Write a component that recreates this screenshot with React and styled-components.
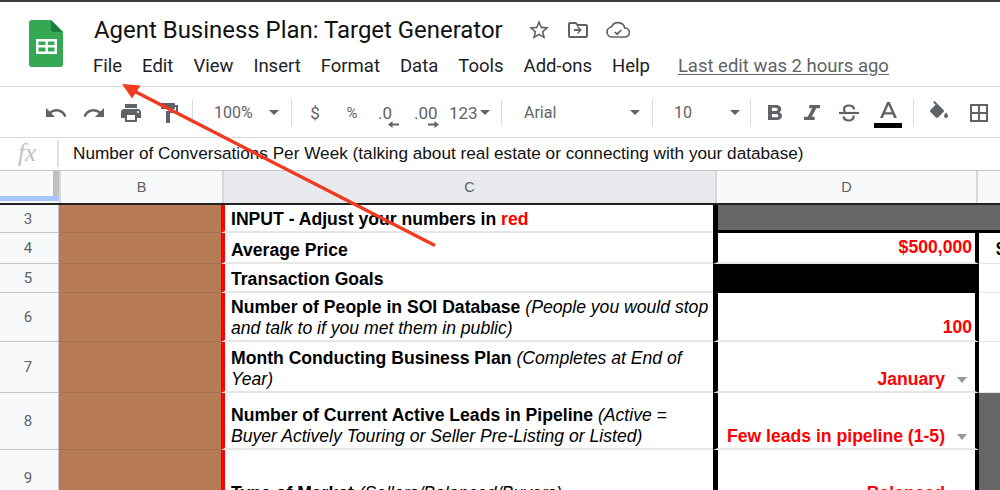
import React from "react";
import styled, { createGlobalStyle } from "styled-components";

const Global = createGlobalStyle`
  html, body { margin: 0; padding: 0; background: #fff; }
  #root { width: 1000px; height: 490px; overflow: hidden; }
`;

const Page = styled.div`
  position: relative;
  width: 1000px;
  height: 490px;
  overflow: hidden;
  background: #fff;
  display: flex;
  flex-direction: column;
  font-family: Roboto, sans-serif;
`;

const Header = styled.header`
  height: 87px;
  flex: none;
  box-sizing: border-box;
  border-top: 2px solid #3c3c3c;
  border-bottom: 1px solid #dadce0;
  display: flex;
  padding-left: 29px;
`;
const LogoWrap = styled.div`
  width: 34px;
  padding-top: 18px;
  margin-right: 30px;
  flex: none;
`;
const HeaderBody = styled.div`
  display: flex;
  flex-direction: column;
  padding-top: 11px;
`;
const TitleRow = styled.div`
  display: flex;
  align-items: center;
  height: 34px;
  margin-left: 1px;
`;
const Title = styled.h1`
  margin: 0 24px 0 0;
  font: 400 23.95px/34px Roboto, sans-serif;
  color: #111;
  white-space: nowrap;
`;
const TitleIcon = styled.svg`
  width: ${(p) => p.$size || 24}px;
  height: ${(p) => p.$size || 24}px;
  fill: #5f6368;
  margin-right: ${(p) => p.$gap || 15}px;
`;
const CloudIcon = styled.svg`
  width: 24px;
  height: 24px;
  fill: none;
  stroke: #5f6368;
  stroke-width: 1.7;
  margin-left: 1px;
`;
const Menu = styled.nav`
  display: flex;
  align-items: center;
  gap: 20px;
  height: 26px;
  margin-top: 6px;
  font-size: 18.5px;
  color: #202124;
`;
const LastEdit = styled.a`
  color: #5f6368;
  text-decoration: underline;
  text-underline-offset: 2px;
  margin-left: 8px;
  font-size: 18.5px;
  white-space: nowrap;
`;

const Toolbar = styled.div`
  height: 51px;
  flex: none;
  box-sizing: border-box;
  display: flex;
  align-items: center;
  padding: 1px 0 0 36px;
  border-bottom: 1px solid #dadce0;
  color: #5f6368;
`;
const Tool = styled.div`
  width: ${(p) => p.$w}px;
  flex: none;
  display: flex;
  align-items: center;
  justify-content: ${(p) => p.$justify || "center"};
  padding-left: ${(p) => p.$pl || 0}px;
  box-sizing: border-box;
  font-size: ${(p) => p.$fs || 16}px;
  color: #5f6368;
`;
const ToolIcon = styled.svg`
  width: ${(p) => p.$w || 24}px;
  height: ${(p) => p.$h || 24}px;
  fill: #5f6368;
  flex: none;
`;
const StrikeIcon = styled.svg`
  width: 20px;
  height: 18px;
  fill: none;
  stroke: #5f6368;
  stroke-width: 2.2;
  flex: none;
`;
const Divider = styled.div`
  width: 1px;
  height: 27px;
  background: #dadce0;
  flex: none;
`;
const Caret = styled.i`
  display: inline-block;
  width: 0;
  height: 0;
  border-left: 5px solid transparent;
  border-right: 5px solid transparent;
  border-top: 5px solid ${(p) => p.$color || "#5f6368"};
  margin-left: ${(p) => p.$ml || 0}px;
  flex: none;
`;
const Spacer = styled.span`
  flex: 1;
`;
const DecimalBox = styled.span`
  display: inline-flex;
  flex-direction: column;
  align-items: flex-start;
  line-height: 20px;
  font-size: 17px;
`;
const TinyArrow = styled.svg`
  width: 11px;
  height: 7px;
  fill: #5f6368;
  margin: -2px 0 -5px ${(p) => p.$ml || 0}px;
`;
const ColorStack = styled.span`
  display: flex;
  flex-direction: column;
  align-items: center;
  padding-top: 5px;
`;
const ColorBar = styled.span`
  width: 28px;
  height: 5px;
  background: #000;
  margin-top: 5px;
`;

const FormulaBar = styled.div`
  height: 33px;
  flex: none;
  box-sizing: border-box;
  display: flex;
  align-items: center;
  padding-bottom: 2px;
  border-bottom: 1px solid #c8c8c8;
`;
const Fx = styled.span`
  width: 59px;
  flex: none;
  box-sizing: border-box;
  padding-left: 18px;
  font: italic 400 25px/30px "Liberation Serif", serif;
  color: #bdc1c6;
  height: 27px;
  border-right: 2px solid #e0e0e0;
  display: flex;
  align-items: center;
`;
const FormulaText = styled.span`
  padding-left: 14px;
  font: 400 17.2px/30px "Liberation Sans", sans-serif;
  color: #111;
  white-space: nowrap;
`;

const ColHeaders = styled.div`
  display: grid;
  grid-template-columns: 59px 163px 493px 261px 24px;
  height: 34px;
  flex: none;
  box-sizing: border-box;
  border-bottom: 2px solid #222;
  background: #f8f9fa;
`;
const Corner = styled.div`
  display: flex;
  flex-direction: column;
  background: #f8f9fa;
`;
const FreezeBar = styled.div`
  flex: 1;
  border-right: 6px solid #bfc0c2;
`;
const BlueStrip = styled.div`
  height: 5px;
  background: #a6c5fa;
  margin-bottom: 2px;
`;
const ColHead = styled.div`
  display: flex;
  align-items: center;
  justify-content: center;
  font: 400 14.5px "Liberation Sans", sans-serif;
  color: #5f6368;
  background: ${(p) => (p.$active ? "#e8eaed" : "#f8f9fa")};
  border-left: 2px solid #d6d7d9;
  box-sizing: border-box;
`;

const Grid = styled.div`
  display: grid;
  flex: none;
  grid-template-columns: 59px 162px 493px 265px 21px;
  grid-template-rows: 28px 31px 29px 49px 51px 57px 57px;
  font: 400 17.6px/21px "Liberation Sans", sans-serif;
  color: #000;
`;
const RowHead = styled.div`
  display: flex;
  align-items: center;
  justify-content: center;
  box-sizing: border-box;
  padding-right: 2px;
  background: #f8f9fa;
  border-right: 1px solid #c4c5c7;
  border-bottom: 1px solid #c4c5c7;
  font: 400 15px Roboto, sans-serif;
  color: #5f6368;
`;
const Brown = styled.div`
  background: #b67a54;
  border-bottom: 1px solid #a5714f;
`;
const Label = styled.div`
  box-sizing: border-box;
  border-left: 4px solid #ff0000;
  border-bottom: 2px solid #e6e6e6;
  padding: 0 0 1px 6px;
  display: flex;
  flex-direction: column;
  justify-content: flex-end;
  white-space: nowrap;
  overflow: hidden;
`;
const Line = styled.div`
  height: 21px;
  flex: none;
`;
const Red = styled.span`
  color: #ff0000;
  font-weight: 700;
`;
const Value = styled.div`
  box-sizing: border-box;
  border-left: 5px solid #000;
  border-right: 4px solid #000;
  margin-left: -1px;
  background: ${(p) => (p.$bg ? p.$bg : "#fff")};
  border-bottom: ${(p) => (p.$bg ? "0" : "2px solid #e6e6e6")};
  padding: 0 3px ${(p) => p.$pb ?? 2}px 0;
  display: flex;
  align-items: flex-end;
  justify-content: flex-end;
  color: #ff0000;
  font-weight: 700;
  white-space: nowrap;
`;
const Dropdown = styled.div`
  display: flex;
  align-items: flex-end;
  padding-right: 5px;
`;
const DropCaret = styled(Caret)`
  margin: 0 0 7px 12px;
  border-left-width: 5.5px;
  border-right-width: 5.5px;
  border-top-width: 6px;
`;
const GrayTop = styled.div`
  grid-column: 4 / span 2;
  background: #666;
  border-left: 5px solid #000;
  margin-left: -1px;
  border-bottom: 3px solid #000;
  box-sizing: border-box;
`;
const Extra = styled.div`
  background: ${(p) => (p.$dark ? "#666" : "#fff")};
  border-bottom: ${(p) => (p.$dark ? "0" : "1px solid #e6e6e6")};
  padding: 0 0 3px 17px;
  font-weight: 700;
  display: flex;
  align-items: flex-end;
  box-sizing: border-box;
  overflow: hidden;
`;

const ArrowOverlay = styled.svg`
  position: absolute;
  left: 0;
  top: 0;
  width: 1000px;
  height: 490px;
  pointer-events: none;
`;

const Logo = () => (
  <svg width="34" height="47" viewBox="0 0 34 47">
    <path d="M3 0H22L34 12V44a3 3 0 0 1-3 3H3a3 3 0 0 1-3-3V3a3 3 0 0 1 3-3z" fill="#34a853" />
    <path d="M22 0L34 12H25a3 3 0 0 1-3-3z" fill="#188038" />
    <path d="M7 19H28V34H7zM9.5 21.5V25H16.5V21.5zM19 21.5V25H25.5V21.5zM9.5 27.5V31.5H16.5V27.5zM19 27.5V31.5H25.5V27.5z" fill="#fff" fillRule="evenodd" />
  </svg>
);

const I = ({ d, w, h, vb = "0 0 24 24" }) => (
  <ToolIcon $w={w} $h={h} viewBox={vb} preserveAspectRatio="none"><path d={d} /></ToolIcon>
);

const UNDO = "M12.5 8c-2.65 0-5.05.99-6.9 2.6L2 7v9h9l-3.62-3.62c1.39-1.16 3.16-1.88 5.12-1.88 3.54 0 6.55 2.31 7.6 5.5l2.37-.78C21.08 11.03 17.15 8 12.5 8z";
const REDO = "M18.4 10.6C16.55 8.99 14.15 8 11.5 8c-4.65 0-8.58 3.03-9.96 7.22L3.9 16c1.05-3.19 4.05-5.5 7.6-5.5 1.95 0 3.73.72 5.12 1.88L13 16h9V7l-3.6 3.6z";
const PRINT = "M19 8H5c-1.66 0-3 1.34-3 3v6h4v4h12v-4h4v-6c0-1.66-1.34-3-3-3zm-3 11H8v-5h8v5zm3-7c-.55 0-1-.45-1-1s.45-1 1-1 1 .45 1 1-.45 1-1 1zm-1-9H6v4h12V3z";
const PAINT = "M18 4V3c0-.55-.45-1-1-1H5c-.55 0-1 .45-1 1v4c0 .55.45 1 1 1h12c.55 0 1-.45 1-1V6h1v4H9v11c0 .55.45 1 1 1h2c.55 0 1-.45 1-1v-9h8V4h-3z";
const BOLD = "M15.6 10.79c.97-.67 1.65-1.77 1.65-2.79 0-2.26-1.75-4-4-4H7v14h7.04c2.09 0 3.71-1.7 3.71-3.79 0-1.52-.86-2.82-2.15-3.42zM10 6.5h3c.83 0 1.5.67 1.5 1.5s-.67 1.5-1.5 1.5h-3v-3zm3.5 9H10v-3h3.5c.83 0 1.5.67 1.5 1.5s-.67 1.5-1.5 1.5z";
const ITALIC = "M10 4v3h2.21l-3.42 8H6v3h8v-3h-2.21l3.42-8H18V4z";
const TEXTA = "M11 3L5.5 17h2.25l1.12-3h6.25l1.12 3h2.25L13 3h-2zm-1.38 9L12 5.67 14.38 12H9.62z";
const FILL = "M16.56 8.94L7.62 0 6.21 1.41l2.38 2.38-5.15 5.15c-.59.59-.59 1.54 0 2.12l5.5 5.5c.29.29.68.44 1.06.44s.77-.15 1.06-.44l5.5-5.5c.59-.58.59-1.53 0-2.12zM19 11.5s-2 2.17-2 3.5c0 1.1.9 2 2 2s2-.9 2-2c0-1.33-2-3.5-2-3.5z";
const BORDERS = "M3 3v18h18V3H3zm8 16H5v-6h6v6zm0-8H5V5h6v6zm8 8h-6v-6h6v6zm0-8h-6V5h6v6z";
const STAR = "M22 9.24l-7.19-.62L12 2 9.19 8.63 2 9.24l5.46 4.73L5.82 21 12 17.27 18.18 21l-1.63-7.03L22 9.24zM12 15.4l-3.76 2.27 1-4.28-3.32-2.88 4.38-.38L12 6.1l1.71 4.04 4.38.38-3.32 2.88 1 4.28L12 15.4z";
const FOLDER = "M20 6h-8l-2-2H4c-1.1 0-2 .9-2 2v12c0 1.1.9 2 2 2h16c1.1 0 2-.9 2-2V8c0-1.1-.9-2-2-2zm0 12H4V6h5.17l2 2H20v10zm-8.16-2l4-4-4-4-1.06 1.06L12.97 11H8v2h4.97l-2.19 2.19L11.84 16z";

const menuItems = ["File", "Edit", "View", "Insert", "Format", "Data", "Tools", "Add-ons", "Help"];

export default function App() {
  return (
    <Page>
      <Global />
      <Header>
        <LogoWrap><Logo /></LogoWrap>
        <HeaderBody>
          <TitleRow>
            <Title>Agent Business Plan: Target Generator</Title>
            <TitleIcon viewBox="0 0 24 24"><path d={STAR} /></TitleIcon>
            <TitleIcon viewBox="0 0 24 24"><path d={FOLDER} /></TitleIcon>
            <CloudIcon viewBox="0 0 24 24">
              <path d="M6 19a5 5 0 0 1-.5-9.97A7 7 0 0 1 18.8 10a4.5 4.5 0 0 1 .2 9z" />
              <path d="M8.8 14l2.3 2.2 4.2-4.2" />
            </CloudIcon>
          </TitleRow>
          <Menu>
            {menuItems.map((m) => <span key={m}>{m}</span>)}
            <LastEdit>Last edit was 2 hours ago</LastEdit>
          </Menu>
        </HeaderBody>
      </Header>

      <Toolbar>
        <Tool $w={40}><I d={UNDO} /></Tool>
        <Tool $w={36}><I d={REDO} /></Tool>
        <Tool $w={38}><I d={PRINT} /></Tool>
        <Tool $w={38}><I d={PAINT} /></Tool>
        <Tool $w={4} />
        <Divider />
        <Tool $w={98} $justify="flex-start" $pl={21}>100%<Spacer /><Caret /><Tool $w={12} /></Tool>
        <Divider />
        <Tool $w={46} $fs={17}>$</Tool>
        <Tool $w={28} $fs={15}>%</Tool>
        <Tool $w={34} $justify="flex-start" $pl={12}>
          <DecimalBox>.0<TinyArrow $ml={10} viewBox="0 0 11 7"><path d="M4.5 0L0 3.5 4.5 7V4.5H11v-2H4.5z" /></TinyArrow></DecimalBox>
        </Tool>
        <Tool $w={42} $justify="flex-start" $pl={14}>
          <DecimalBox>.00<TinyArrow $ml={14} viewBox="0 0 11 7"><path d="M6.5 0L11 3.5 6.5 7V4.5H0v-2h6.5z" /></TinyArrow></DecimalBox>
        </Tool>
        <Tool $w={59} $justify="flex-start" $pl={7} $fs={17}>123<Caret $ml={2} /></Tool>
        <Divider />
        <Tool $w={150} $justify="flex-start" $pl={22}>Arial<Spacer /><Caret /><Tool $w={12} /></Tool>
        <Divider />
        <Tool $w={97} $justify="flex-start" $pl={21}>10<Spacer /><Caret /><Tool $w={10} /></Tool>
        <Divider />
        <Tool $w={48}><I d={BOLD} w={14} h={15} vb="7 4 10.75 14" /></Tool>
        <Tool $w={26}><I d={ITALIC} w={16} h={15} vb="6 4 12 14" /></Tool>
        <Tool $w={48}>
          <StrikeIcon viewBox="0 0 20 18">
            <path d="M0 9H20" />
            <path d="M15 5.5C15 3 13 1.5 10 1.5C7 1.5 5 3 5 5.2C5 6 5.3 7 6 8" />
            <path d="M14.5 11.5C15.2 14 13 16.5 10 16.5C7 16.5 5 15 4.5 12.5" />
          </StrikeIcon>
        </Tool>
        <Tool $w={30}>
          <ColorStack><I d={TEXTA} w={17} h={16} vb="5.5 3 13 14" /><ColorBar /></ColorStack>
        </Tool>
        <Tool $w={10} />
        <Divider />
        <Tool $w={50}><I d={FILL} /></Tool>
        <Tool $w={30}><I d={BORDERS} /></Tool>
      </Toolbar>

      <FormulaBar>
        <Fx>fx</Fx>
        <FormulaText>Number of Conversations Per Week (talking about real estate or connecting with your database)</FormulaText>
      </FormulaBar>

      <ColHeaders>
        <Corner><FreezeBar /><BlueStrip /></Corner>
        <ColHead>B</ColHead>
        <ColHead $active>C</ColHead>
        <ColHead>D</ColHead>
        <ColHead />
      </ColHeaders>

      <Grid>
        <RowHead>3</RowHead>
        <Brown />
        <Label><Line><b>INPUT - Adjust your numbers in <Red>red</Red></b></Line></Label>
        <GrayTop />

        <RowHead>4</RowHead>
        <Brown />
        <Label><Line><b>Average Price</b></Line></Label>
        <Value $pb={4}>$500,000</Value>
        <Extra>$</Extra>

        <RowHead>5</RowHead>
        <Brown />
        <Label><Line><b>Transaction Goals</b></Line></Label>
        <Value $bg="#000" />
        <Extra />

        <RowHead>6</RowHead>
        <Brown />
        <Label>
          <Line><b>Number of People in SOI Database</b> <em>(People you would stop</em></Line>
          <Line><em>and talk to if you met them in public)</em></Line>
        </Label>
        <Value>100</Value>
        <Extra />

        <RowHead>7</RowHead>
        <Brown />
        <Label>
          <Line><b>Month Conducting Business Plan</b> <em>(Completes at End of</em></Line>
          <Line><em>Year)</em></Line>
        </Label>
        <Value $pb={1}><Dropdown>January<DropCaret $color="#999" /></Dropdown></Value>
        <Extra />

        <RowHead>8</RowHead>
        <Brown />
        <Label>
          <Line><b>Number of Current Active Leads in Pipeline</b> <em>(Active =</em></Line>
          <Line><em>Buyer Actively Touring or Seller Pre-Listing or Listed)</em></Line>
        </Label>
        <Value $pb={1}><Dropdown>Few leads in pipeline (1-5)<DropCaret $color="#999" /></Dropdown></Value>
        <Extra $dark />

        <RowHead>9</RowHead>
        <Brown />
        <Label>
          <Line><b>Type of Market</b> <em>(Sellers/Balanced/Buyers)</em></Line>
        </Label>
        <Value $pb={1}><Dropdown>Balanced<DropCaret $color="#999" /></Dropdown></Value>
        <Extra $dark />
      </Grid>

      <ArrowOverlay viewBox="0 0 1000 490">
        <path d="M435 245.5L134 91" stroke="#f13a22" strokeWidth="3.5" fill="none" />
        <path d="M122 84L132 98.5L140.5 85.5z" fill="#f13a22" />
      </ArrowOverlay>
    </Page>
  );
}
